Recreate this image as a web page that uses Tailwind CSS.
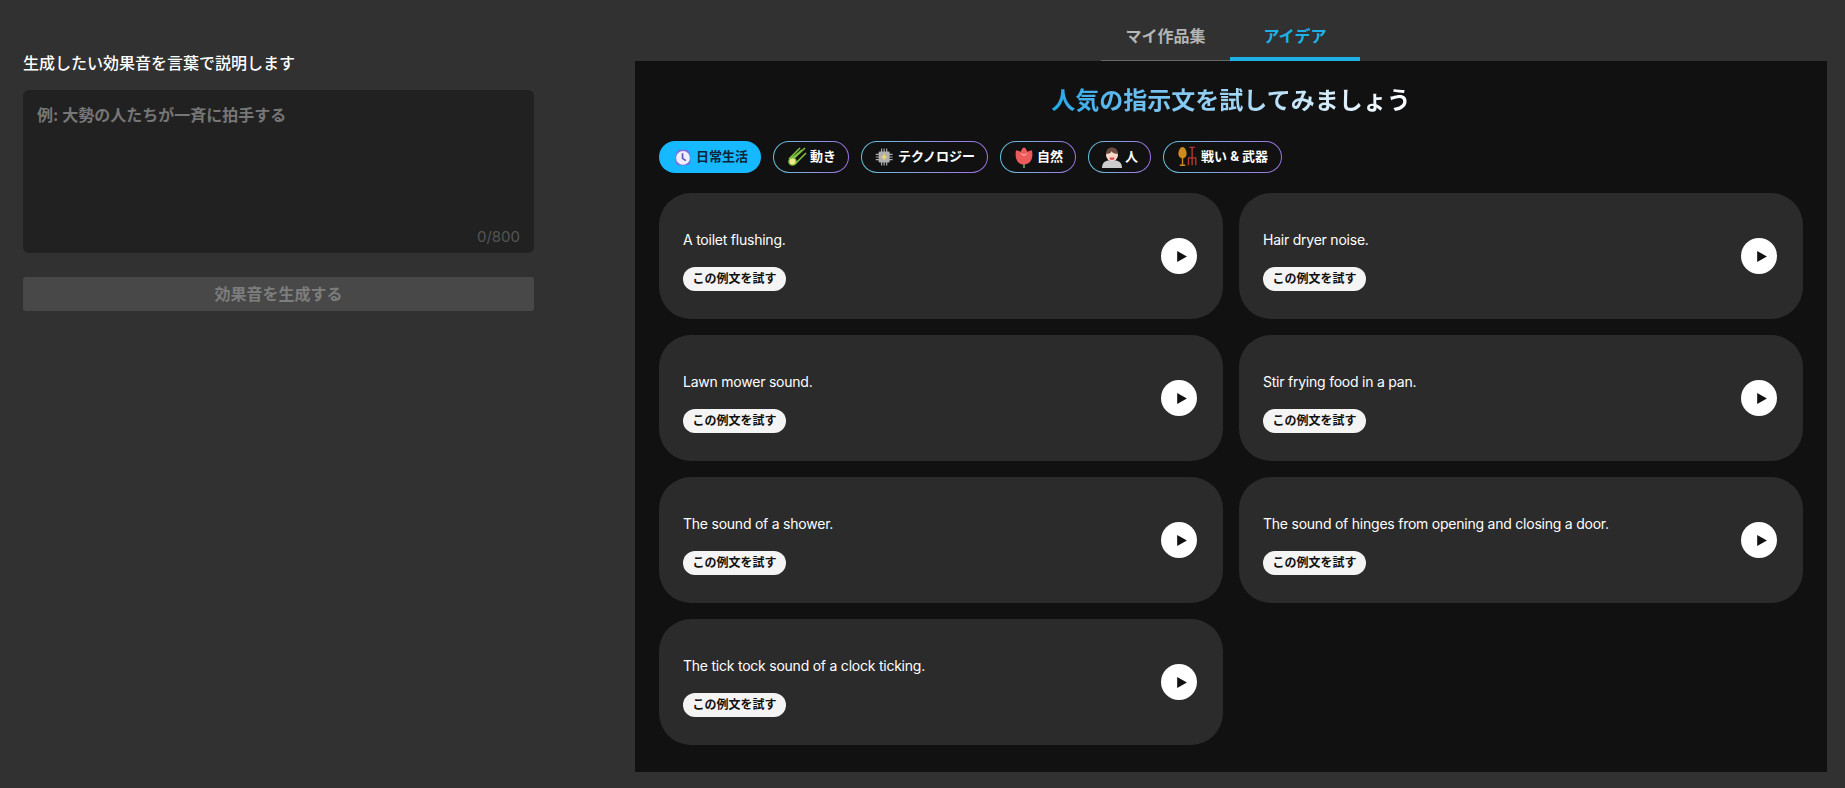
<!DOCTYPE html>
<html lang="ja">
<head>
    <meta charset="UTF-8" />
    <title>効果音</title>
    <script src="https://cdn.jsdelivr.net/npm/@tailwindcss/browser@4"></script>
</head>
<body class="bg-[#313131] text-white h-[788px] overflow-hidden font-['Inter','Noto_Sans_CJK_JP',sans-serif]">
    <div class="flex pl-[23px] pr-[18px] h-full">
        <!-- Left form -->
        <div class="w-[511px] shrink-0 pt-[53px]">
            <label class="block text-base leading-5 font-medium mb-[17px]">生成したい効果音を言葉で説明します</label>
            <div class="relative h-[163px] bg-[#212121] rounded-md">
                <div class="px-[14px] pt-[13px] text-base leading-6 font-bold text-[#767676]">例: 大勢の人たちが一斉に拍手する</div>
                <span class="absolute right-[14px] bottom-[6px] text-[15px] leading-5 text-[#555]">0/800</span>
            </div>
            <button class="block w-full h-[34px] mt-6 bg-[#484848] rounded-[3px] text-base font-bold text-[#7d7d7d]">効果音を生成する</button>
        </div>

        <!-- Right panel -->
        <div class="ml-[101px] flex-1 flex flex-col">
            <div class="flex justify-center h-[61px] pt-4 text-base font-bold">
                <div class="w-[129px] ml-[-2px] pl-px text-center text-[#b5b5b5] border-b border-[#666] pt-2">マイ作品集</div>
                <div class="w-[130px] pl-px text-center text-[#1fb1e6] border-b-4 border-[#1fb1e6] pt-2">アイデア</div>
            </div>
            <div class="h-[711px] bg-[#111111] px-6 pt-6">
                <h2 class="text-center text-2xl leading-8 font-bold"><span class="bg-linear-to-r from-[#1fa8e8] to-white bg-clip-text text-transparent">人気の指示文を試してみましょう</span></h2>
                <div class="flex gap-3 mt-6 text-[13px] font-bold">
                    <button class="flex items-center gap-0.5 h-8 w-[102px] justify-center rounded-full bg-[#16b8ff] text-[#0c2438]">
                        <svg class="w-[22px] h-[22px]" viewBox="-1 -1 24 24"><path d="M6 3h10l2 3 1 5v5a4 4 0 0 1-4 4H7a4 4 0 0 1-4-4v-5l1-5z" fill="#7a6fe0"/><circle cx="11" cy="12" r="7.500" fill="#eeeefc"/><path d="M10.500 7v5.500l3.500 2.500" fill="none" stroke="#5b54b8" stroke-width="1.800"/></svg>
                        日常生活
                    </button>
                    <div class="h-8 w-[76px] rounded-full p-px bg-linear-to-r from-[#5fc3dc] to-[#9a6fe0]">
                        <div class="flex items-center justify-center gap-0.5 h-full rounded-full bg-[#111111]">
                            <svg class="w-[22px] h-[22px]" viewBox="0 0 22 22"><path d="M3 13 14 2M5 15 19 2M9 18 20 7M6 12 16 4" fill="none" stroke="#7ec242" stroke-width="1.600"/><circle cx="6.500" cy="15.500" r="3.600" fill="#f6e98c" stroke="#7ec242" stroke-width="1.400"/></svg>
                            動き
                        </div>
                    </div>
                    <div class="h-8 w-[127px] rounded-full p-px bg-linear-to-r from-[#5fc3dc] to-[#9a6fe0]">
                        <div class="flex items-center justify-center gap-0.5 h-full rounded-full bg-[#111111]">
                            <svg class="w-[22px] h-[22px]" viewBox="-1 -2 26 26"><path d="M1 8h20M1 11h20M1 14h20M8 1v20M11 1v20M14 1v20" stroke="#a8a8a8" stroke-width="1.400"/><rect x="4.500" y="4.500" width="13" height="13" rx="1.500" fill="#b0b0b0"/><path d="M11 7l1.200 2.800L15 11l-2.800 1.200L11 15l-1.200-2.800L7 11l2.800-1.200z" fill="#f5d76e"/></svg>
                            テクノロジー
                        </div>
                    </div>
                    <div class="h-8 w-[76px] rounded-full p-px bg-linear-to-r from-[#5fc3dc] to-[#9a6fe0]">
                        <div class="flex items-center justify-center gap-0.5 h-full rounded-full bg-[#111111]">
                            <svg class="w-[22px] h-[22px]" viewBox="0 0 22 22"><path d="M11 17v5" stroke="#6aa56a" stroke-width="1.600"/><path d="M3 4.500c2 0 3.500.5 4.500 1.500C8.500 3.500 10 1.500 11 1.500s2.500 2 3.500 4.500c1-1 2.500-1.500 4.500-1.500 1.500 7-1 14-8 14S1.500 11.500 3 4.500z" fill="#ee5a5a"/><path d="M7.500 6c1 3 6 3 7 0-.5 5-6.500 5-7 0z" fill="#fba5a5"/></svg>
                            自然
                        </div>
                    </div>
                    <div class="h-8 w-[63px] rounded-full p-px bg-linear-to-r from-[#5fc3dc] to-[#9a6fe0]">
                        <div class="flex items-center justify-center gap-0.5 h-full rounded-full bg-[#111111]">
                            <svg class="w-[22px] h-[22px]" viewBox="0 0 22 22"><path d="M1 22c0-6 4-8 10-8s10 2 10 8z" fill="#cdcdcd"/><circle cx="11" cy="9" r="6" fill="#fbd9c8"/><path d="M5 8C5 3.500 8 1.500 11 1.500S17 3.500 17 8c-3 0-5.500-1-6.500-2.800C10 7 8 8 5 8z" fill="#6d4c41"/><path d="M8.500 11.500h5a2.500 2.500 0 0 1-5 0z" fill="#d9534f"/></svg>
                            人
                        </div>
                    </div>
                    <div class="h-8 w-[119px] rounded-full p-px bg-linear-to-r from-[#5fc3dc] to-[#9a6fe0]">
                        <div class="flex items-center justify-center gap-0.5 h-full rounded-full bg-[#111111]">
                            <svg class="w-[22px] h-[22px]" viewBox="0 0 24 24"><path d="M6 1c3 0 4.500 4.500 4.500 7.500S8.500 13.500 6 13.500 1.500 11.500 1.500 8.500 3 1 6 1z" fill="#d18a1e"/><path d="M6 13v8M3 21h6" stroke="#d18a1e" stroke-width="1.500"/><path d="M16.500 1v20M13.500 1.500h6M12.500 21v-8h8v8" fill="none" stroke="#b5392d" stroke-width="1.500"/></svg>
                            <span class="font-bold">戦い &amp; 武器</span>
                        </div>
                    </div>
                </div>
                <div class="grid grid-cols-2 gap-4 mt-5">
                    <!-- cards -->
                    <div class="flex items-center justify-between h-[126px] bg-[#2b2b2b] rounded-[32px] pl-6 pr-[26px]">
                        <div class="flex flex-col items-start gap-[17px] mt-2">
                            <p class="pt-px text-sm leading-5 tracking-[-0.23px]">A toilet flushing.</p>
                            <button class="h-6 px-[9.5px] rounded-full bg-[#f4f4f4] text-[#111] text-xs font-semibold">この例文を試す</button>
                        </div>
                        <button class="flex items-center justify-center w-9 h-9 rounded-full bg-white"><svg class="w-[13px] h-[13px] ml-1" viewBox="0 0 12 12"><path d="M2 1v10l9-5z" fill="#111"/></svg></button>
                    </div>
                    <div class="flex items-center justify-between h-[126px] bg-[#2b2b2b] rounded-[32px] pl-6 pr-[26px]">
                        <div class="flex flex-col items-start gap-[17px] mt-2">
                            <p class="pt-px text-sm leading-5 tracking-[-0.23px]">Hair dryer noise.</p>
                            <button class="h-6 px-[9.5px] rounded-full bg-[#f4f4f4] text-[#111] text-xs font-semibold">この例文を試す</button>
                        </div>
                        <button class="flex items-center justify-center w-9 h-9 rounded-full bg-white"><svg class="w-[13px] h-[13px] ml-1" viewBox="0 0 12 12"><path d="M2 1v10l9-5z" fill="#111"/></svg></button>
                    </div>
                    <div class="flex items-center justify-between h-[126px] bg-[#2b2b2b] rounded-[32px] pl-6 pr-[26px]">
                        <div class="flex flex-col items-start gap-[17px] mt-2">
                            <p class="pt-px text-sm leading-5 tracking-[-0.23px]">Lawn mower sound.</p>
                            <button class="h-6 px-[9.5px] rounded-full bg-[#f4f4f4] text-[#111] text-xs font-semibold">この例文を試す</button>
                        </div>
                        <button class="flex items-center justify-center w-9 h-9 rounded-full bg-white"><svg class="w-[13px] h-[13px] ml-1" viewBox="0 0 12 12"><path d="M2 1v10l9-5z" fill="#111"/></svg></button>
                    </div>
                    <div class="flex items-center justify-between h-[126px] bg-[#2b2b2b] rounded-[32px] pl-6 pr-[26px]">
                        <div class="flex flex-col items-start gap-[17px] mt-2">
                            <p class="pt-px text-sm leading-5 tracking-[-0.23px]">Stir frying food in a pan.</p>
                            <button class="h-6 px-[9.5px] rounded-full bg-[#f4f4f4] text-[#111] text-xs font-semibold">この例文を試す</button>
                        </div>
                        <button class="flex items-center justify-center w-9 h-9 rounded-full bg-white"><svg class="w-[13px] h-[13px] ml-1" viewBox="0 0 12 12"><path d="M2 1v10l9-5z" fill="#111"/></svg></button>
                    </div>
                    <div class="flex items-center justify-between h-[126px] bg-[#2b2b2b] rounded-[32px] pl-6 pr-[26px]">
                        <div class="flex flex-col items-start gap-[17px] mt-2">
                            <p class="pt-px text-sm leading-5 tracking-[-0.23px]">The sound of a shower.</p>
                            <button class="h-6 px-[9.5px] rounded-full bg-[#f4f4f4] text-[#111] text-xs font-semibold">この例文を試す</button>
                        </div>
                        <button class="flex items-center justify-center w-9 h-9 rounded-full bg-white"><svg class="w-[13px] h-[13px] ml-1" viewBox="0 0 12 12"><path d="M2 1v10l9-5z" fill="#111"/></svg></button>
                    </div>
                    <div class="flex items-center justify-between h-[126px] bg-[#2b2b2b] rounded-[32px] pl-6 pr-[26px]">
                        <div class="flex flex-col items-start gap-[17px] mt-2">
                            <p class="pt-px text-sm leading-5 tracking-[-0.23px]">The sound of hinges from opening and closing a door.</p>
                            <button class="h-6 px-[9.5px] rounded-full bg-[#f4f4f4] text-[#111] text-xs font-semibold">この例文を試す</button>
                        </div>
                        <button class="flex items-center justify-center w-9 h-9 rounded-full bg-white"><svg class="w-[13px] h-[13px] ml-1" viewBox="0 0 12 12"><path d="M2 1v10l9-5z" fill="#111"/></svg></button>
                    </div>
                    <div class="flex items-center justify-between h-[126px] bg-[#2b2b2b] rounded-[32px] pl-6 pr-[26px]">
                        <div class="flex flex-col items-start gap-[17px] mt-2">
                            <p class="pt-px text-sm leading-5 tracking-[-0.23px]">The tick tock sound of a clock ticking.</p>
                            <button class="h-6 px-[9.5px] rounded-full bg-[#f4f4f4] text-[#111] text-xs font-semibold">この例文を試す</button>
                        </div>
                        <button class="flex items-center justify-center w-9 h-9 rounded-full bg-white"><svg class="w-[13px] h-[13px] ml-1" viewBox="0 0 12 12"><path d="M2 1v10l9-5z" fill="#111"/></svg></button>
                    </div>
                </div>
            </div>
        </div>
    </div>
</body>
</html>
